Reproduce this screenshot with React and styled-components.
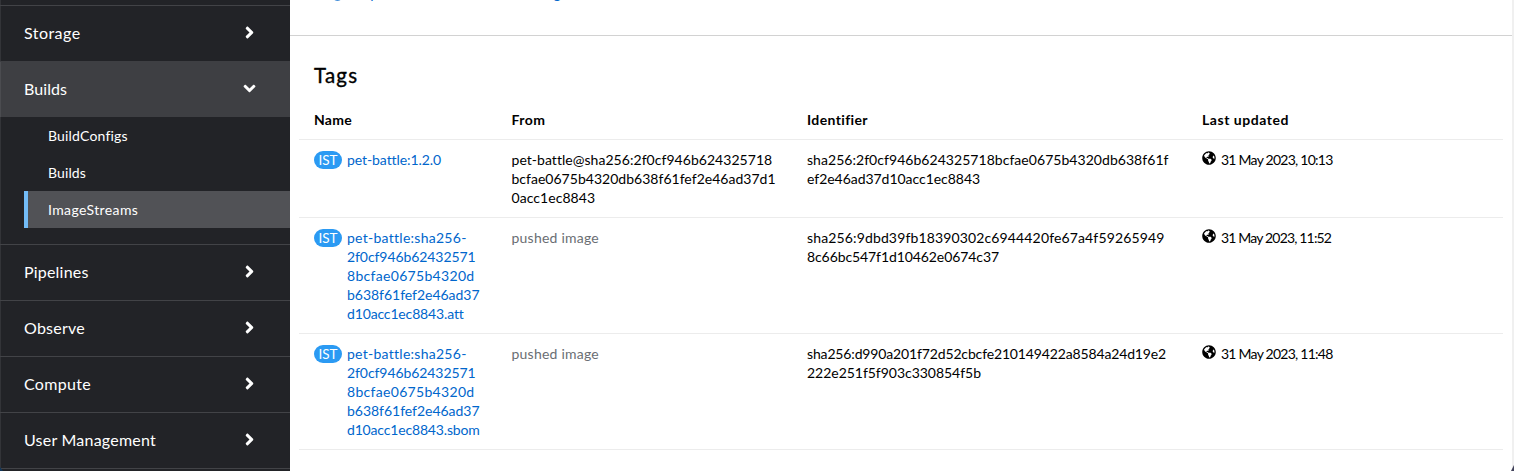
import React from "react";
import styled, { createGlobalStyle, css } from "styled-components";
import { FaAngleDown, FaAngleRight, FaGlobeAmericas, FaQuestionCircle } from "react-icons/fa";

const GlobalStyle = createGlobalStyle`
  * { box-sizing: border-box; }
  body {
    margin: 0;
    overflow: hidden;
    background: #fff;
    color: #151515;
    font: 400 14px/19px Lato, "Liberation Sans", sans-serif;
  }
`;

const Page = styled.div`
  position: relative;
  display: flex;
  height: 471px;
  overflow: hidden;
`;

const Sidebar = styled.nav`
  flex: 0 0 290px;
  background: #222327;
  color: #fff;
  box-shadow: inset 1px 0 #333438;
  padding-top: 5px;
`;

const NavButton = styled.div`
  display: flex;
  align-items: center;
  justify-content: space-between;
  height: 56px;
  padding: 0 35px 2px 24px;
  border-top: 1px solid #424347;
  font-size: 16px;
  ${(p) => p.$open && css`
    background: #3e3f43;
    box-shadow: inset 1px 0 #4b4c50;
    border-color: #3e3f43;
  `}
  svg {
    width: 19px;
    height: 19px;
    margin: 0 -4px 1px 0;
  }
`;

const SubNav = styled.div`
  padding-bottom: 16px;
`;

const SubItem = styled.div`
  height: 37px;
  margin-left: 24px;
  padding-left: 20px;
  border-left: 4px solid ${(p) => (p.$current ? "#73bcf7" : "transparent")};
  background: ${(p) => (p.$current ? "#515256" : "transparent")};
  line-height: 37px;
`;

const Tracked = styled.span`
  letter-spacing: ${(p) => p.$track || 0}px;
`;

const Main = styled.main`
  flex: 1;
  min-width: 0;
  border-right: 2px solid #f0f0f0;
`;

const Details = styled.section`
  height: 36px;
  border-bottom: 1px solid #d2d2d2;
  overflow: hidden;
`;

const HelpLink = styled.a`
  display: flex;
  align-items: center;
  gap: 4px;
  height: 20px;
  margin: -17px 0 0 41px;
  color: #06c;
  white-space: nowrap;
  letter-spacing: -0.18px;
  svg { width: 13px; height: 13px; margin-top: 2px; }
`;

const Title = styled.h2`
  margin: 26px 0 0 24px;
  font-size: 20.5px;
  font-weight: 400;
  line-height: 26px;
  letter-spacing: 1.2px;
  color: #000;
  -webkit-text-stroke: 0.35px #000;
`;

const Table = styled.div`
  margin: 13px 9px 0;
`;

const Row = styled.div`
  display: grid;
  grid-template-columns: 197.5px 295.5px 395px 1fr;
  padding: 10px 0 10px 15px;
  border-bottom: 1px solid #ececec;
  color: #000;
`;

const HeaderRow = styled(Row)`
  height: 39px;
  font-weight: 700;
  padding-top: 9px;
`;

const Lines = styled.div`
  display: flex;
  flex-direction: column;
  align-items: flex-start;
  white-space: nowrap;
  color: ${(p) => (p.$muted ? "#6a6e73" : "inherit")};
`;

const Resource = styled.div`
  display: flex;
  align-items: flex-start;
  gap: 5px;
  color: #06c;
`;

const Badge = styled.span`
  width: 28px;
  height: 18px;
  margin-top: 1px;
  border-radius: 9px;
  background: #2b9af3;
  color: #fff;
  font-size: 13.5px;
  line-height: 18px;
  text-align: center;
`;

const Timestamp = styled.div`
  display: flex;
  align-items: flex-start;
  gap: 5px;
  white-space: nowrap;
  svg { width: 14px; height: 14px; margin-top: 1px; }
`;

const WindowCorner = styled.i`
  position: absolute;
  bottom: 0;
  ${(p) => p.$side}: 0;
  width: 3px;
  height: ${(p) => (p.$side === "left" ? 4 : 6)}px;
  background: ${(p) => (p.$side === "left" ? "#12375a" : "#41425a")};
  clip-path: ${(p) => (p.$side === "left" ? "polygon(0 0, 100% 100%, 0 100%)" : "polygon(100% 0, 100% 100%, 0 100%)")};
`;

const subItems = [["BuildConfigs", 0.18], ["Builds", 0.12], ["ImageStreams", 0.38]];
const lowerNav = [["Pipelines", 0.2], ["Observe", 0.24], ["Compute", 0.32], ["User Management", 0.23]];
const headers = [["Name", 0.27], ["From", 0.46], ["Identifier", 0.37], ["Last updated", 0.54]];

const digestLines = [
  ["pet-battle:sha256-", 0.27],
  ["2f0cf946b62432571", -0.08],
  ["8bcfae0675b4320d", 0.31],
  ["b638f61fef2e46ad37", -0.03],
];

const tags = [
  {
    name: [["pet-battle:1.2.0", -0.08]],
    from: [
      ["pet-battle@sha256:2f0cf946b624325718", 0.04],
      ["bcfae0675b4320db638f61fef2e46ad37d1", 0.02],
      ["0acc1ec8843", 0.06],
    ],
    id: [
      ["sha256:2f0cf946b624325718bcfae0675b4320db638f61f", 0.045],
      ["ef2e46ad37d10acc1ec8843", -0.04],
    ],
    updated: ["31 May 2023, 10:13", -0.75],
  },
  {
    name: [...digestLines, ["d10acc1ec8843.att", -0.15]],
    id: [
      ["sha256:9dbd39fb18390302c6944420fe67a4f59265949", 0.14],
      ["8c66bc547f1d10462e0674c37", -0.09],
    ],
    updated: ["31 May 2023, 11:52", -0.83],
  },
  {
    name: [...digestLines, ["d10acc1ec8843.sbom", -0.17]],
    id: [
      ["sha256:d990a201f72d52cbcfe210149422a8584a24d19e2", -0.146],
      ["222e251f5f903c330854f5b", -0.03],
    ],
    updated: ["31 May 2023, 11:48", -0.75],
  },
];

function TextLines({ lines, muted }) {
  return (
    <Lines $muted={muted}>
      {lines.map(([text, track]) => <Tracked key={text} $track={track}>{text}</Tracked>)}
    </Lines>
  );
}

function NavSection({ label, track, open }) {
  return (
    <NavButton $open={open}>
      <Tracked $track={track}>{label}</Tracked>
      {open ? <FaAngleDown /> : <FaAngleRight />}
    </NavButton>
  );
}

export default function App() {
  return (
    <Page>
      <GlobalStyle />
      <Sidebar>
        <NavSection label="Storage" track={0.45} />
        <NavSection label="Builds" track={0.07} open />
        <SubNav>
          {subItems.map(([label, track]) => (
            <SubItem key={label} $current={label === "ImageStreams"}>
              <Tracked $track={track}>{label}</Tracked>
            </SubItem>
          ))}
        </SubNav>
        {lowerNav.map(([label, track]) => <NavSection key={label} label={label} track={track} />)}
        <NavButton />
      </Sidebar>
      <Main>
        <Details>
          <HelpLink>
            <FaQuestionCircle />
            Do you need to work with this Image Stream outside of the web console?
          </HelpLink>
        </Details>
        <Title>Tags</Title>
        <Table>
          <HeaderRow>
            {headers.map(([label, track]) => <Tracked key={label} $track={track}>{label}</Tracked>)}
          </HeaderRow>
          {tags.map((tag) => (
            <Row key={tag.updated[0]}>
              <Resource>
                <Badge>IST</Badge>
                <TextLines lines={tag.name} />
              </Resource>
              <TextLines lines={tag.from || [["pushed image", 0.23]]} muted={!tag.from} />
              <TextLines lines={tag.id} />
              <Timestamp>
                <FaGlobeAmericas />
                <Tracked $track={tag.updated[1]}>{tag.updated[0]}</Tracked>
              </Timestamp>
            </Row>
          ))}
        </Table>
      </Main>
      <WindowCorner $side="left" />
      <WindowCorner $side="right" />
    </Page>
  );
}
